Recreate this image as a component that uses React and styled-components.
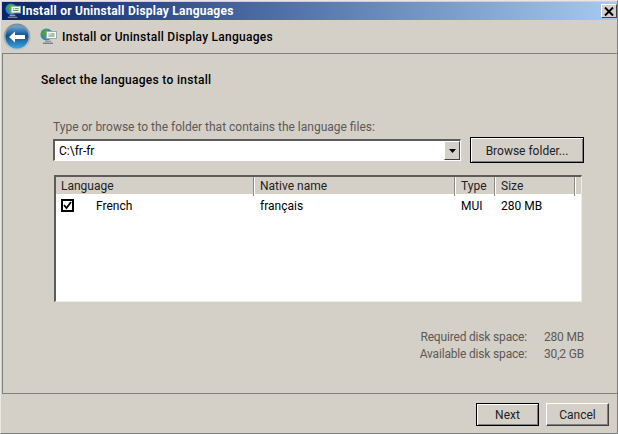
import React from 'react';
import styled, { createGlobalStyle } from 'styled-components';

const GlobalStyle = createGlobalStyle`
  html, body {
    margin: 0;
    padding: 0;
    background: #d4d0c8;
  }
`;

const Window = styled.div`
  width: 618px;
  height: 434px;
  box-sizing: border-box;
  padding: 1px 0 0 1px;
  background: #d4d0c8;
  border-top: 1px solid #e8e6e0;
  border-left: 1px solid #e8e6e0;
  border-right: 1px solid #808080;
  border-bottom: 1px solid #808080;
  display: flex;
  flex-direction: column;
  overflow: hidden;
  font-family: Roboto, "Noto Sans", sans-serif;
  font-size: 12px;
  color: #000;
`;

const TitleBar = styled.div`
  height: 18px;
  flex: none;
  display: flex;
  align-items: center;
  padding-left: 3px;
  background: linear-gradient(90deg, #0a246a 0%, #a6caf0 100%);
`;

const TitleText = styled.div`
  flex: 1;
  margin-left: 1px;
  color: #fff;
  font-weight: 700;
  letter-spacing: 0.24px;
`;

const CloseButton = styled.div`
  width: 16px;
  height: 14px;
  box-sizing: border-box;
  background: #d4d0c8;
  border-top: 1px solid #fff;
  border-left: 1px solid #fff;
  border-right: 1px solid #404040;
  border-bottom: 1px solid #404040;
  display: flex;
  align-items: center;
  justify-content: center;
`;

const NavBar = styled.div`
  height: 34px;
  box-sizing: border-box;
  flex: none;
  display: flex;
  align-items: center;
  border-bottom: 1px solid #808080;
`;

const BackWrap = styled.div`
  width: 28px;
  height: 28px;
  margin-left: 1px;
`;

const NavIcon = styled.div`
  margin-left: 9px;
  width: 17px;
  height: 17px;
`;

const NavTitle = styled.div`
  margin-left: 5px;
  font-weight: 500;
  letter-spacing: 0.26px;
`;

const Content = styled.div`
  flex: 1;
  padding: 18px 33px 0 50px;
  display: flex;
  flex-direction: column;
  border-left: 1px solid #808080;
`;

const Heading = styled.div`
  margin-left: -12px;
  font-weight: 500;
  line-height: 16px;
  letter-spacing: 0.3px;
`;

const FieldLabel = styled.div`
  margin-top: 31px;
  line-height: 16px;
  color: #5c5a56;
`;

const PathRow = styled.div`
  margin-top: 2px;
  display: flex;
  align-items: center;
  gap: 9px;
`;

const Combo = styled.div`
  width: 408px;
  height: 22px;
  box-sizing: border-box;
  background: #fff;
  border-top: 2px solid #5e5c58;
  border-left: 2px solid #5e5c58;
  border-right: 1px solid #fff;
  border-bottom: 1px solid #fff;
  display: flex;
  align-items: stretch;
  padding-left: 4px;
`;

const ComboValue = styled.div`
  flex: 1;
  line-height: 20px;
`;

const ComboArrow = styled.div`
  width: 16px;
  box-sizing: border-box;
  background: #d4d0c8;
  border-top: 1px solid #fff;
  border-left: 1px solid #fff;
  border-right: 1px solid #404040;
  border-bottom: 1px solid #404040;
  display: flex;
  align-items: center;
  justify-content: center;
`;

const Button = styled.div`
  box-sizing: border-box;
  width: ${p => p.$width}px;
  height: ${p => p.$height}px;
  padding-top: ${p => p.$drop || 0}px;
  background: #d4d0c8;
  display: flex;
  align-items: center;
  justify-content: center;
  color: #222;
  border: 1px solid ${p => (p.$primary ? '#000' : '#fff')};
  border-right-color: ${p => (p.$primary ? '#000' : '#404040')};
  border-bottom-color: ${p => (p.$primary ? '#000' : '#404040')};
  box-shadow: ${p => (p.$primary
    ? 'inset 1px 1px 0 #fff, inset -1px -1px 0 #808080'
    : 'inset -1px -1px 0 #808080')};
`;

const Table = styled.div`
  margin: 12px 0 0 1px;
  width: 528px;
  height: 127px;
  box-sizing: border-box;
  background: #fff;
  border-top: 2px solid #5e5c58;
  border-left: 2px solid #5e5c58;
  border-right: 1px solid #eeece8;
  border-bottom: 1px solid #eeece8;
  display: flex;
  flex-direction: column;
`;

const columns = '198px 201px 40px 80px 1fr';

const HeaderRow = styled.div`
  height: 17px;
  flex: none;
  display: grid;
  grid-template-columns: ${columns};
  background: #d4d0c8;
  border-bottom: 1px solid #fff;
`;

const HeaderCell = styled.div`
  padding-left: 6px;
  line-height: 19px;
  border-right: 1px solid #8a8884;
  box-shadow: 1px 0 0 #fff;
  color: #222;
  &:first-child {
    padding-left: 5px;
  }
`;

const DataRow = styled.div`
  display: grid;
  grid-template-columns: ${columns};
  height: 21px;
  align-items: center;
`;

const LanguageCell = styled.div`
  display: flex;
  align-items: center;
  padding-left: 5px;
`;

const Check = styled.div`
  width: 13px;
  height: 13px;
  box-sizing: border-box;
  border: 2px solid #000;
  display: flex;
  align-items: center;
  justify-content: center;
  margin-right: 22px;
`;

const Cell = styled.div`
  padding-left: 6px;
`;

const DiskInfo = styled.div`
  margin: 27px 0 0 auto;
  display: grid;
  grid-template-columns: auto 39px;
  column-gap: 18px;
  line-height: 17px;
  color: #5c5a56;
  letter-spacing: -0.18px;
  justify-items: end;
  white-space: nowrap;
`;

const Footer = styled.div`
  height: 40px;
  box-sizing: border-box;
  flex: none;
  border-top: 1px solid #808080;
  display: flex;
  justify-content: flex-end;
  align-items: flex-start;
  gap: 7px;
  padding: 9px 8px 0 0;
`;

const GlobeIcon = ({ size }) => (
  <svg width={size} height={size} viewBox="0 0 17 17">
    <circle cx="6.500" cy="6.500" r="6" fill="#2f86c4" />
    <path d="M2 4.500l2.500-3 3-.5 1 2-2 1.500-.5 2.500 1.500 2-1.500 2-1.500-1-.5-2.500-2-1z" fill="#46a838" />
    <rect x="6.500" y="3.500" width="10" height="7" fill="#f8f8f4" stroke="#9aa8b0" />
    <path d="M8.500 6h1M10.500 6h4M8.500 8h6" stroke="#3c9a48" strokeWidth="1" />
    <path d="M5 12.500h6v1.500H5z" fill="#9a9ea2" />
    <path d="M3 14.500h10V16H3z" fill="#7e8286" />
  </svg>
);

const BackIcon = () => (
  <svg width="28" height="28" viewBox="0 0 28 28">
    <defs>
      <linearGradient id="backFill" x1="0" y1="0" x2="0" y2="1">
        <stop offset="0" stopColor="#6aaedc" />
        <stop offset="0.45" stopColor="#0f4f8e" />
        <stop offset="1" stopColor="#35a8e0" />
      </linearGradient>
      <linearGradient id="backRing" x1="0" y1="0" x2="0" y2="1">
        <stop offset="0" stopColor="#7c8a94" />
        <stop offset="1" stopColor="#c4ccd0" />
      </linearGradient>
    </defs>
    <circle cx="14" cy="14" r="13.500" fill="url(#backRing)" />
    <circle cx="14" cy="14" r="11.500" fill="url(#backFill)" />
    <path d="M6 14l6-5.500v3.500h10v4H12v3.500z" fill="#fff" />
  </svg>
);

const App = () => (
  <>
    <GlobalStyle />
    <Window>
      <TitleBar>
        <GlobeIcon size={16} />
        <TitleText>Install or Uninstall Display Languages</TitleText>
        <CloseButton>
          <svg width="10" height="9" viewBox="0 0 10 9">
            <path d="M1 .500l8 8M9 .500l-8 8" stroke="#000" strokeWidth="2" />
          </svg>
        </CloseButton>
      </TitleBar>
      <NavBar>
        <BackWrap><BackIcon /></BackWrap>
        <NavIcon><GlobeIcon size={17} /></NavIcon>
        <NavTitle>Install or Uninstall Display Languages</NavTitle>
      </NavBar>
      <Content>
        <Heading>Select the languages to install</Heading>
        <FieldLabel>Type or browse to the folder that contains the language files:</FieldLabel>
        <PathRow>
          <Combo>
            <ComboValue>C:\fr-fr</ComboValue>
            <ComboArrow>
              <svg width="7" height="4" viewBox="0 0 7 4"><path d="M0 0h7L3.500 4z" fill="#000" /></svg>
            </ComboArrow>
          </Combo>
          <Button $primary $width={114} $height={26} $drop={1}>Browse folder...</Button>
        </PathRow>
        <Table>
          <HeaderRow>
            <HeaderCell>Language</HeaderCell>
            <HeaderCell>Native name</HeaderCell>
            <HeaderCell>Type</HeaderCell>
            <HeaderCell>Size</HeaderCell>
          </HeaderRow>
          <DataRow>
            <LanguageCell>
              <Check>
                <svg width="9" height="9" viewBox="0 0 9 9">
                  <path d="M1 4l2.500 3L8 1" fill="none" stroke="#000" strokeWidth="1.800" />
                </svg>
              </Check>
              French
            </LanguageCell>
            <Cell>français</Cell>
            <Cell>MUI</Cell>
            <Cell>280 MB</Cell>
          </DataRow>
        </Table>
        <DiskInfo>
          <span>Required disk space:</span>
          <span>280 MB</span>
          <span>Available disk space:</span>
          <span>30,2 GB</span>
        </DiskInfo>
      </Content>
      <Footer>
        <Button $primary $width={63} $height={23}>Next</Button>
        <Button $width={63} $height={23}>Cancel</Button>
      </Footer>
    </Window>
  </>
);

export default App;
